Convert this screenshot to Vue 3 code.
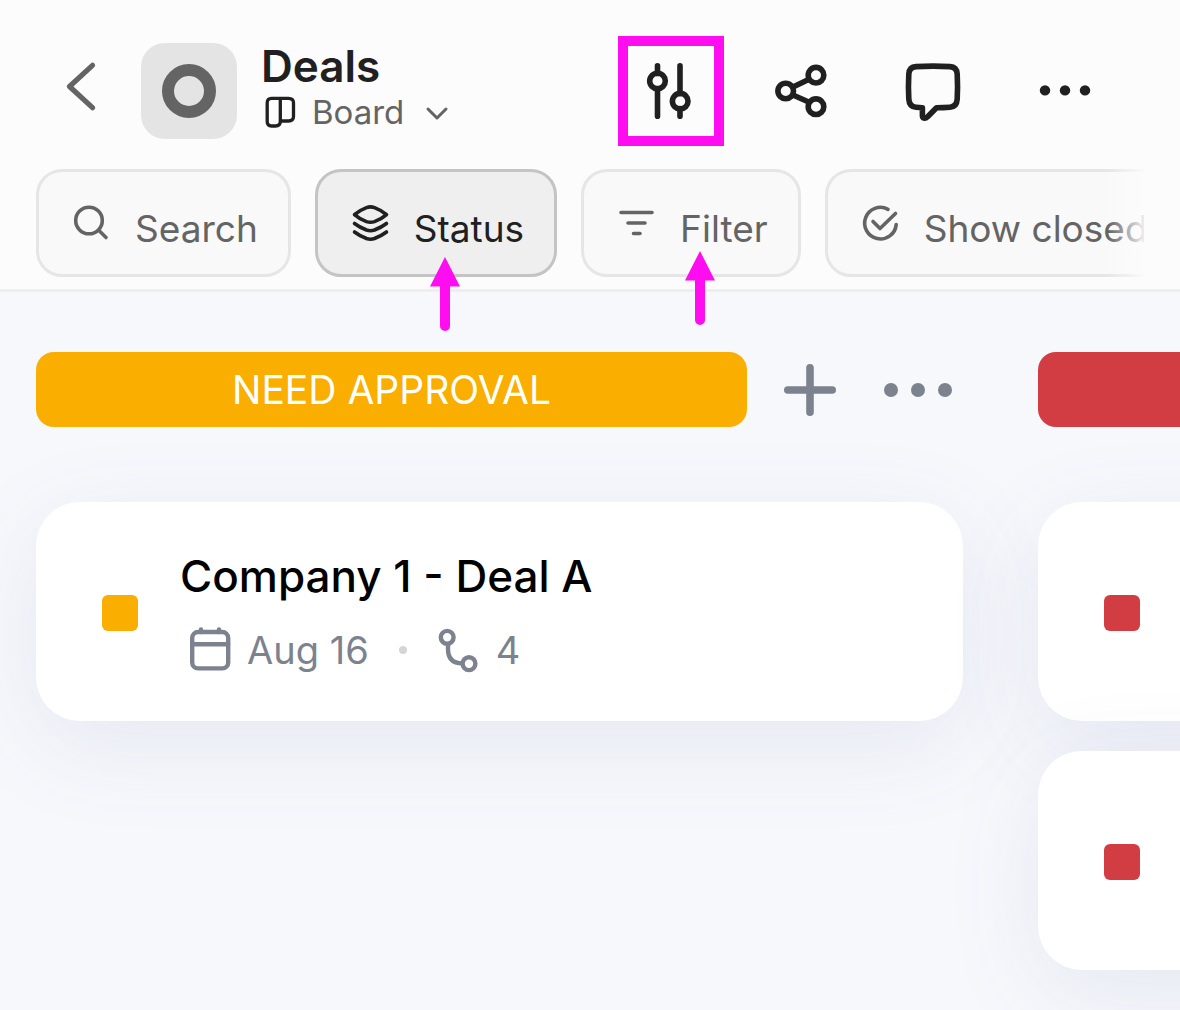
<template>

<div class="page">

    <header class="header">

        <!-- Title bar -->

        <div class="title-bar">

            <button class="back" type="button" aria-label="Back">

                <svg viewBox="0 0 64 64" width="64" height="64">
                    <path d="M43.5 6.3 20.5 27.5 43.5 48.7" stroke-width="5.2" />
                </svg>

            </button>

            <svg class="logo" viewBox="0 0 96 96" width="96" height="96">
                <circle cx="48" cy="48" r="21" stroke-width="12" />
            </svg>

            <div class="heading">

                <h1>Deals</h1>

                <button class="view" type="button" aria-haspopup="menu">

                    <svg class="view-icon" viewBox="0 0 32 32" width="32" height="32">
                        <path d="M16.3 2.4H7.5Q3.2 2.4 3.2 6.8V25.6Q3.2 30 7.5 30H11.5Q16.3 30 16.3 25.6V2.4H24.5Q29.5 2.4 29.5 6.8V20.6Q29.5 25 24.5 25H16.3" stroke-width="3.3" />
                    </svg>

                    <span>Board</span>

                    <svg viewBox="0 0 22 22" width="22" height="22">
                        <path d="M2 8 11 17 20 8" stroke-width="3" />
                    </svg>

                </button>

            </div>

            <nav class="tools">

                <button class="highlighted" type="button" aria-label="Settings">
                    <svg viewBox="0 0 64 64" width="64" height="64">
                        <path d="M18.5 6.7V14.4M18.5 29.6V57.3M41 6.7V34.4M41 49.6V57.3" />
                        <circle cx="18.5" cy="22" r="7.8" />
                        <circle cx="41.2" cy="42.2" r="7.8" />
                    </svg>
                </button>

                <button type="button" aria-label="Share">
                    <svg viewBox="0 0 64 64" width="64" height="64">
                        <path d="M22 28 37.6 20.5M22 36 37.6 43" />
                        <circle cx="14.7" cy="32" r="7.8" />
                        <circle cx="45" cy="16.2" r="7.8" />
                        <circle cx="45" cy="47.7" r="7.8" />
                    </svg>
                </button>

                <button type="button" aria-label="Comments">
                    <svg viewBox="0 0 64 64" width="64" height="64">
                        <path d="M13 7.6Q30 6.6 47 7.6C51.5 7.9 53.9 10.5 54.2 15Q54.9 28 54.2 40C53.9 45.5 51.5 47.9 47 48.2Q40 48.7 33.5 48.7L24.6 57.8C22 60.2 19.4 59.4 19.4 56.5V48.7Q16.5 48.7 13 48.3C8.5 47.9 6.1 45.5 5.8 40Q5.1 28 5.8 15C6.1 10.5 8.5 7.9 13 7.6Z" />
                    </svg>
                </button>

                <button type="button" aria-label="More">
                    <svg class="dots" viewBox="0 0 64 64" width="64" height="64">
                        <circle cx="10" cy="31.4" r="5.2" />
                        <circle cx="30" cy="31.4" r="5.2" />
                        <circle cx="50" cy="31.4" r="5.2" />
                    </svg>
                </button>

            </nav>

        </div>

        <!-- Filters -->

        <div class="chips">

            <button class="chip" type="button">
                <svg viewBox="0 0 38 38" width="38" height="38">
                    <circle cx="17" cy="16.5" r="13.3" />
                    <path d="M27 26.5 34 33.5" />
                </svg>
                <span>Search</span>
            </button>

            <button class="chip active" type="button">
                <svg viewBox="0 0 38 38" width="38" height="38">
                    <path d="M3.5 10.6Q8 6.5 15.5 3.6Q19.5 2.2 23.5 3.6Q31 6.5 35.5 10.6Q31 14.7 23.5 17.6Q19.5 19 15.5 17.6Q8 14.7 3.5 10.6Z" />
                    <path d="M3.5 19.5Q8 23 15.5 26Q19.5 27.4 23.5 26Q31 23 35.5 19.5" />
                    <path d="M3.5 28Q8 31.5 15.5 34.5Q19.5 35.9 23.5 34.5Q31 31.5 35.5 28" />
                </svg>
                <span>Status</span>
                <svg class="arrow" viewBox="0 0 30 74" width="30" height="74">
                    <path d="M15 0 30 29.5H20V69A5 5 0 0 1 10 69V29.5H0Z" />
                </svg>
            </button>

            <button class="chip" type="button">
                <svg viewBox="0 0 38 38" width="38" height="38">
                    <path d="M4 8.5H35M11 19H28M16.5 29.5H23" />
                </svg>
                <span>Filter</span>
                <svg class="arrow raised" viewBox="0 0 30 74" width="30" height="74">
                    <path d="M15 0 30 29.5H20V69A5 5 0 0 1 10 69V29.5H0Z" />
                </svg>
            </button>

            <button class="chip" type="button">
                <svg viewBox="0 0 38 38" width="38" height="38">
                    <path d="M27 5.3A15.8 15.8 0 1 0 35.2 20.5" />
                    <path d="M12 17.5 19 24.5 34.5 9.5" />
                </svg>
                <span>Show closed</span>
            </button>

        </div>

    </header>

    <!-- Board -->

    <main class="board">

        <section
            v-for="column in columns"
            :key="column.id"
            class="column"
            :class="column.id"
        >

            <div class="column-header">

                <h2>{{ column.label }}</h2>

                <button type="button" aria-label="Add task">
                    <svg viewBox="0 0 54 54" width="54" height="54">
                        <path d="M27 4.8V49.2M4.8 27H49.2" stroke-width="7.6" />
                    </svg>
                </button>

                <button class="column-more" type="button" aria-label="Column options">
                    <svg class="dots" viewBox="0 0 70 54" width="70" height="54">
                        <circle cx="8" cy="27" r="7" />
                        <circle cx="35" cy="27" r="7" />
                        <circle cx="62" cy="27" r="7" />
                    </svg>
                </button>

            </div>

            <article
                v-for="card in column.cards"
                :key="card.id"
                class="card"
            >

                <span class="status"></span>

                <div v-if="card.title" class="card-body">

                    <h3>{{ card.title }}</h3>

                    <div class="meta">

                        <svg viewBox="0 0 44 44" width="44" height="44">
                            <rect x="4.2" y="4" width="36" height="36.4" rx="6" />
                            <path d="M4.2 16.3H40.2M13 1.5V4M31 1.5V4" />
                        </svg>

                        <span>{{ card.date }}</span>

                        <i class="separator"></i>

                        <svg viewBox="0 0 44 44" width="44" height="44">
                            <circle cx="10.2" cy="9.3" r="6.4" />
                            <circle cx="32" cy="35.7" r="6.4" />
                            <path d="M11 16V21Q11 35.3 25 35.3" />
                        </svg>

                        <span>{{ card.subtasks }}</span>

                    </div>

                </div>

            </article>

        </section>

    </main>

</div>

</template>

<script setup>

const columns = [

    {
        id: 'approval',

        label: 'NEED APPROVAL',

        cards: [
            { id: 1, title: 'Company 1 - Deal A', date: 'Aug 16', subtasks: 4 }
        ]
    },

    {
        id: 'blocked',

        label: '',

        cards: [
            { id: 2 },
            { id: 3 }
        ]
    }
]

</script>

<style>

body {

    margin: 0;
}

</style>

<style scoped>

.page {

    display: flex;

    flex-direction: column;

    min-height: 100vh;

    overflow: hidden;

    background: #f7f8fc;

    font-family: Inter, "Liberation Sans", sans-serif;
}

button {

    display: flex;

    align-items: center;

    justify-content: center;

    box-sizing: border-box;

    padding: 0;

    border: none;

    background: none;

    color: inherit;

    font: inherit;

    cursor: pointer;
}

h1,
h2,
h3 {

    margin: 0;

    font-weight: 500;
}

svg {

    flex: none;

    overflow: visible;

    fill: none;

    stroke: currentColor;

    stroke-linecap: round;

    stroke-linejoin: round;
}

.dots {

    fill: currentColor;

    stroke: none;
}

/* Header */

.header {

    position: relative;

    z-index: 1;

    padding: 36px 36px 12px;

    border-bottom: 3px solid #eeeeee;

    background: #fcfcfc;
}

.title-bar {

    display: flex;

    align-items: center;

    height: 110px;

    margin-bottom: 23px;
}

.back {

    width: 90px;

    height: 96px;

    margin-right: 15px;

    color: #646464;
}

.logo {

    border-radius: 24px;

    background: #e4e4e4;

    color: #646464;
}

.heading {

    height: 96px;

    margin-left: 24px;
}

.heading h1 {

    color: #202020;

    font-size: 44px;

    font-weight: 600;

    line-height: 46px;
}

.view {

    padding-left: 3px;

    color: #646464;

    font-size: 33px;

    line-height: 46px;
}

.view-icon {

    margin-right: 16px;

    color: #202020;
}

.view span {

    margin-right: 22px;
}

.tools {

    display: flex;

    gap: 26px;

    margin-left: auto;

    margin-right: 24px;

    color: #202020;
}

.tools button {

    width: 106px;

    height: 110px;
}

.tools svg {

    stroke-width: 5.6px;
}

.tools .highlighted {

    border: 10px solid #ff0df0;
}

/* Chips */

.chips {

    position: relative;

    display: flex;

    gap: 24px;

    overflow-x: clip;
}

.chips::after {

    content: "";

    position: absolute;

    top: 0;

    right: 0;

    width: 36px;

    height: 100%;

    background: linear-gradient(to right, rgba(252, 252, 252, 0), rgba(252, 252, 252, 0.9));
}

.chip {

    position: relative;

    flex: none;

    gap: 25px;

    height: 108px;

    padding: 0 30px 0 33px;

    border: 3px solid #e6e6e6;

    border-radius: 26px;

    background: #f9f9f9;

    color: #646464;

    font-size: 37px;

    white-space: nowrap;
}

.chip svg {

    stroke-width: 3.6px;
}

.chip span {

    padding-top: 10px;
}

.chip.active {

    border-color: #c4c4c4;

    background: #efefef;

    color: #202020;
}

.chip .arrow {

    position: absolute;

    top: 85px;

    left: calc(50% - 6px);

    fill: #ff0df0;

    stroke: none;
}

.chip .raised {

    top: 79px;
}

/* Board */

.board {

    display: flex;

    flex: 1;

    gap: 75px;

    padding: 60px 36px 40px;
}

.column {

    display: flex;

    flex: none;

    flex-direction: column;

    gap: 30px;

    width: min(927px, 84vw);
}

.approval {

    --status: #f9ae00;
}

.blocked {

    --status: #d23c43;
}

.column-header {

    display: flex;

    align-items: center;

    margin-bottom: 45px;

    padding-right: 10px;

    color: #7c828e;
}

.column-header h2 {

    flex: 1;

    height: 75px;

    margin-right: 36px;

    border-radius: 18px;

    background: var(--status);

    color: white;

    font-size: 39px;

    font-weight: 400;

    line-height: 75px;

    text-align: center;
}

.column-more {

    margin-left: 46px;
}

.card {

    display: flex;

    align-items: center;

    gap: 42px;

    box-sizing: border-box;

    min-height: 219px;

    padding: 47px 66px 44px;

    border-radius: 44px;

    background: white;

    box-shadow:
        0 24px 96px rgba(80, 100, 160, 0.1);
}

.status {

    flex: none;

    width: 36px;

    height: 36px;

    border-radius: 6px;

    background: var(--status);
}

.card h3 {

    margin-bottom: 20px;

    color: black;

    font-size: 44px;

    line-height: 54px;
}

.meta {

    display: flex;

    align-items: center;

    gap: 15px;

    padding-left: 8px;

    color: #7c828e;

    font-size: 38px;

    line-height: 54px;
}

.meta svg {

    stroke-width: 4.4px;
}

.separator {

    width: 8px;

    height: 8px;

    margin: 0 15px;

    border-radius: 50%;

    background: #d5d5d5;
}

</style>
